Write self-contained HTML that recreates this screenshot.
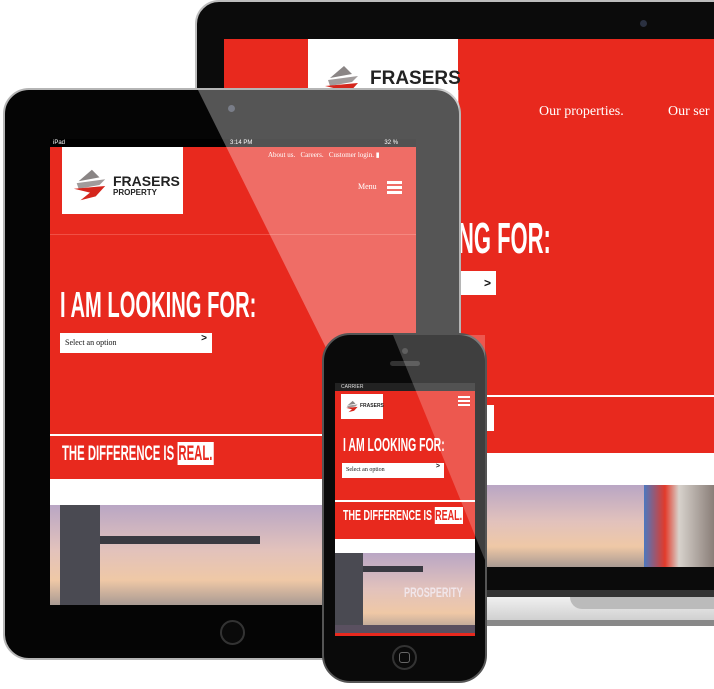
<!DOCTYPE html>
<html><head><meta charset="utf-8"><style>
*{margin:0;padding:0;box-sizing:border-box}
body{width:714px;height:689px;background:#fff;position:relative;overflow:hidden;font-family:"Liberation Sans",sans-serif}
.a{position:absolute}
.disp{font-family:"Liberation Sans Narrow","Liberation Sans",sans-serif;font-weight:bold;color:#fff;white-space:nowrap;transform-origin:left top}
.serif{font-family:"Liberation Serif",serif;color:#fff;white-space:nowrap}
.photo{background:linear-gradient(180deg,#b9a6c4 0%,#e2c2bc 45%,#efc8a6 75%,#a99a93 100%)}
</style></head><body>

<!-- LAPTOP -->
<div class="a" style="left:195px;top:0;width:560px;height:595px;background:#0b0b0b;border-radius:24px 0 0 0;border:2px solid #bdbdbd"></div>
<div class="a" style="left:640px;top:20px;width:7px;height:7px;border-radius:50%;background:#2a3040"></div>
<div class="a" style="left:224px;top:39px;width:490px;height:528px;background:#e8291e"></div>
<div class="a" style="left:308px;top:39px;width:150px;height:82px;background:#fff"></div>
<div class="a" style="left:322px;top:64px"><svg width="40" height="36" viewBox="0 0 40 36"><path d="M22 2 L30 10 L8 14Z" fill="#8a8585"/><path d="M6 16 L36 12 L30 18 L8 22Z" fill="#a19b9b"/><path d="M3 22 L36 19 L26 30 L10 34 L20 26Z" fill="#d5261c"/></svg></div>
<div class="a" style="left:370px;top:68px;font:bold 19px 'Liberation Sans',sans-serif;color:#222">FRASERS</div>
<div class="a serif" style="left:539px;top:104px;font-size:14px">Our properties.</div>
<div class="a serif" style="left:668px;top:104px;font-size:14px">Our ser</div>
<div class="a disp" style="left:436px;top:214px;font-size:44px;transform:scaleX(.5)">KING FOR:</div>
<div class="a" style="left:440px;top:271px;width:56px;height:24px;background:#fff"></div>
<div class="a" style="left:484px;top:276px;font:bold 12px sans-serif;color:#111">&gt;</div>
<div class="a" style="left:224px;top:395px;width:490px;height:2px;background:#fff"></div>
<div class="a" style="left:470px;top:405px;width:24px;height:26px;background:#fff"></div>
<div class="a" style="left:224px;top:453px;width:490px;height:32px;background:#fff"></div>
<div class="a photo" style="left:224px;top:485px;width:420px;height:82px"></div>
<div class="a" style="left:644px;top:485px;width:70px;height:82px;background:linear-gradient(90deg,#4b78c0,#e23a2a 30%,#d7d2cc 50%,#8a7e78)"></div>
<div class="a" style="left:195px;top:590px;width:519px;height:8px;background:#333"></div>
<div class="a" style="left:195px;top:597px;width:519px;height:24px;background:linear-gradient(#f0f0f0,#cfcfcf)"></div>
<div class="a" style="left:570px;top:597px;width:144px;height:12px;background:#bbb;border-radius:0 0 0 12px"></div>
<div class="a" style="left:195px;top:620px;width:519px;height:6px;background:#888"></div>

<!-- IPAD -->
<div class="a" style="left:3px;top:88px;width:458px;height:572px;background:#050505;border-radius:26px;border:2px solid #b5b5b5"></div>
<div class="a" style="left:228px;top:105px;width:7px;height:7px;border-radius:50%;background:#3a4050"></div>
<div class="a" style="left:50px;top:139px;width:366px;height:8px;background:#000;color:#fff;font-size:6px;line-height:8px;padding-left:3px">iPad<span style="margin-left:165px">3:14 PM</span><span style="margin-left:132px">32 %</span></div>
<div class="a" style="left:50px;top:147px;width:366px;height:332px;background:#e8291e"></div>
<div class="a" style="left:62px;top:147px;width:121px;height:67px;background:#fff"></div>
<div class="a" style="left:71px;top:167px"><svg width="38" height="36" viewBox="0 0 40 36"><path d="M22 2 L30 10 L8 14Z" fill="#8a8585"/><path d="M6 16 L36 12 L30 18 L8 22Z" fill="#a19b9b"/><path d="M3 22 L36 19 L26 30 L10 34 L20 26Z" fill="#d5261c"/></svg></div>
<div class="a" style="left:113px;top:173px;font:bold 14px 'Liberation Sans',sans-serif;color:#222">FRASERS</div>
<div class="a" style="left:113px;top:188px;font:bold 8px 'Liberation Sans',sans-serif;color:#222">PROPERTY</div>
<div class="a serif" style="left:268px;top:151px;font-size:7px">About us.&nbsp;&nbsp; Careers.&nbsp;&nbsp; Customer login. &#9646;</div>
<div class="a serif" style="left:358px;top:182px;font-size:8px">Menu</div>
<div class="a" style="left:387px;top:181px;width:15px;height:3px;background:#fff;box-shadow:0 5px 0 #fff,0 10px 0 #fff"></div>
<div class="a" style="left:50px;top:234px;width:366px;height:1px;background:#f05045"></div>
<div class="a disp" style="left:60px;top:284px;font-size:36px;transform:scaleX(.56)">I AM LOOKING FOR:</div>
<div class="a" style="left:60px;top:333px;width:152px;height:20px;background:#fff;font:8px 'Liberation Serif',serif;color:#111;line-height:20px;padding-left:5px">Select an option<span style="position:absolute;right:5px;font:bold 10px sans-serif">&gt;</span></div>
<div class="a" style="left:50px;top:434px;width:366px;height:2px;background:#fff"></div>
<div class="a disp" style="left:62px;top:442px;font-size:21px;transform:scaleX(.54)">THE DIFFERENCE IS <span style="background:#fff;color:#e8291e;padding:0 2px">REAL.</span></div>
<div class="a" style="left:50px;top:479px;width:366px;height:26px;background:#fff"></div>
<div class="a photo" style="left:50px;top:505px;width:366px;height:100px"></div>
<div class="a" style="left:60px;top:505px;width:40px;height:100px;background:#4a4a52"></div>
<div class="a" style="left:100px;top:536px;width:160px;height:8px;background:#3a3a42"></div>
<div class="a" style="left:0;top:0;width:714px;height:689px;background:rgba(255,255,255,.32);clip-path:polygon(198px 90px,459px 90px,459px 658px,480px 658px)"></div>
<div class="a" style="left:220px;top:620px;width:25px;height:25px;border-radius:50%;border:2px solid #333;background:#0a0a0a"></div>

<!-- PHONE -->
<div class="a" style="left:322px;top:333px;width:165px;height:350px;background:#0a0a0a;border-radius:28px;border:2px solid #555"></div>
<div class="a" style="left:402px;top:348px;width:6px;height:6px;border-radius:50%;background:#333"></div>
<div class="a" style="left:390px;top:361px;width:30px;height:5px;border-radius:3px;background:#333"></div>
<div class="a" style="left:335px;top:383px;width:140px;height:8px;background:#222;color:#ddd;font-size:5px;line-height:8px;padding-left:6px">CARRIER</div>
<div class="a" style="left:335px;top:391px;width:140px;height:162px;background:#e8291e"></div>
<div class="a" style="left:341px;top:394px;width:42px;height:25px;background:#fff"></div>
<div class="a" style="left:345px;top:400px"><svg width="14" height="13" viewBox="0 0 40 36"><path d="M22 2 L30 10 L8 14Z" fill="#8a8585"/><path d="M6 16 L36 12 L30 18 L8 22Z" fill="#a19b9b"/><path d="M3 22 L36 19 L26 30 L10 34 L20 26Z" fill="#d5261c"/></svg></div>
<div class="a" style="left:360px;top:403px;font:bold 5px 'Liberation Sans',sans-serif;color:#222">FRASERS</div>
<div class="a" style="left:458px;top:396px;width:12px;height:2px;background:#fff;box-shadow:0 4px 0 #fff,0 8px 0 #fff"></div>
<div class="a disp" style="left:343px;top:435px;font-size:18px;transform:scaleX(.58)">I AM LOOKING FOR:</div>
<div class="a" style="left:342px;top:463px;width:102px;height:15px;background:#fff;font:6px 'Liberation Serif',serif;color:#111;line-height:15px;padding-left:4px">Select an option<span style="position:absolute;right:4px;font:bold 7px sans-serif">&gt;</span></div>
<div class="a" style="left:335px;top:500px;width:140px;height:2px;background:#fff"></div>
<div class="a disp" style="left:343px;top:507px;font-size:15px;transform:scaleX(.6)">THE DIFFERENCE IS <span style="background:#fff;color:#e8291e;padding:0 1px">REAL.</span></div>
<div class="a" style="left:335px;top:539px;width:140px;height:14px;background:#fff"></div>
<div class="a photo" style="left:335px;top:553px;width:140px;height:80px"></div>
<div class="a" style="left:335px;top:553px;width:28px;height:80px;background:#4a4a52"></div>
<div class="a" style="left:363px;top:566px;width:60px;height:6px;background:#3a3a42"></div>
<div class="a disp" style="left:404px;top:584px;font-size:14px;transform:scaleX(.65);color:#f1e6ea">PROSPERITY</div>
<div class="a" style="left:335px;top:625px;width:140px;height:8px;background:#5a5060"></div>
<div class="a" style="left:335px;top:633px;width:140px;height:3px;background:#e8291e"></div>
<div class="a" style="left:0;top:0;width:714px;height:689px;background:rgba(255,255,255,.22);clip-path:polygon(393px 335px,485px 335px,485px 560px)"></div>
<div class="a" style="left:392px;top:645px;width:25px;height:25px;border-radius:50%;border:2px solid #333;background:#0a0a0a"></div>
<div class="a" style="left:399px;top:652px;width:11px;height:11px;border-radius:3px;border:1px solid #666"></div>
</body></html>
